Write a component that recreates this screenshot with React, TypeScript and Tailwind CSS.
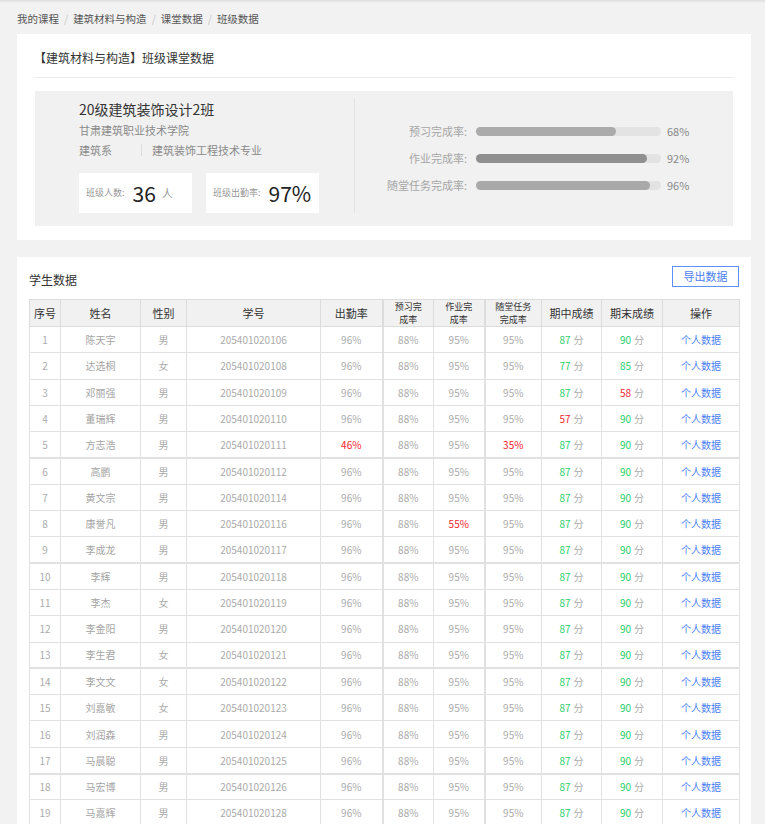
import React from "react";

type Row = {
  no: number;
  name: string;
  sex: string;
  id: string;
  att: string;
  pre: string;
  hw: string;
  task: string;
  mid: number;
  fin: number;
};

const base = { att: "96%", pre: "88%", hw: "95%", task: "95%", mid: 87, fin: 90 };

const rows: Row[] = [
  { no: 1, name: "陈天宇", sex: "男", id: "205401020106", ...base },
  { no: 2, name: "达选桐", sex: "女", id: "205401020108", ...base, mid: 77, fin: 85 },
  { no: 3, name: "邓丽强", sex: "男", id: "205401020109", ...base, fin: 58 },
  { no: 4, name: "董瑞辉", sex: "男", id: "205401020110", ...base, mid: 57 },
  { no: 5, name: "方志浩", sex: "男", id: "205401020111", ...base, att: "46%", task: "35%" },
  { no: 6, name: "高鹏", sex: "男", id: "205401020112", ...base },
  { no: 7, name: "黄文宗", sex: "男", id: "205401020114", ...base },
  { no: 8, name: "康誉凡", sex: "男", id: "205401020116", ...base, hw: "55%" },
  { no: 9, name: "李成龙", sex: "男", id: "205401020117", ...base },
  { no: 10, name: "李辉", sex: "男", id: "205401020118", ...base },
  { no: 11, name: "李杰", sex: "女", id: "205401020119", ...base },
  { no: 12, name: "李金阳", sex: "男", id: "205401020120", ...base },
  { no: 13, name: "李生君", sex: "女", id: "205401020121", ...base },
  { no: 14, name: "李文文", sex: "女", id: "205401020122", ...base },
  { no: 15, name: "刘嘉敏", sex: "女", id: "205401020123", ...base },
  { no: 16, name: "刘润森", sex: "男", id: "205401020124", ...base },
  { no: 17, name: "马晨聪", sex: "男", id: "205401020125", ...base },
  { no: 18, name: "马宏博", sex: "男", id: "205401020126", ...base },
  { no: 19, name: "马嘉辉", sex: "男", id: "205401020128", ...base },
];

const bars = [
  { label: "预习完成率:", value: "68%", w: 140, color: "bg-[#ababab]" },
  { label: "作业完成率:", value: "92%", w: 171, color: "bg-[#909090]" },
  { label: "随堂任务完成率:", value: "96%", w: 174, color: "bg-[#a9a9a9]" },
];

function pctClass(v: string) {
  return parseInt(v) < 60 ? "text-[#f5222d]" : "text-[#ababab]";
}

function scoreClass(v: number) {
  return v < 60 ? "text-[#f5222d]" : "text-[#1fcf6b]";
}

export default function App() {
  const thick = (n: number) => n === 5 || n === 9 || n === 13 || n === 17;
  return (
    <div className="min-h-[824px] w-[765px] bg-[#f2f2f2] font-['Noto_Sans_CJK_SC',sans-serif] overflow-hidden">
      <div className="h-[3px] bg-gradient-to-b from-[#dcdcdc] to-[#f2f2f2]" />
      <div className="pl-[17px] pr-[14px]">
        {/* breadcrumb */}
        <div className="mt-[9px] flex h-[14px] items-center text-[10.5px] leading-[14px] text-[#555]">
          <span>我的课程</span>
          <span className="mx-[5px] text-[#c8c8c8]">/</span>
          <span>建筑材料与构造</span>
          <span className="mx-[5px] text-[#c8c8c8]">/</span>
          <span>课堂数据</span>
          <span className="mx-[5px] text-[#c8c8c8]">/</span>
          <span>班级数据</span>
        </div>

        {/* card 1 */}
        <div className="mt-[8px] bg-white px-[17px] pb-[14px] pt-[16px]">
          <div className="border-b border-[#ececec] pb-[11px] text-[12px] leading-[16px] text-[#333]">
            【建筑材料与构造】班级课堂数据
          </div>
          <div className="mt-[13px] ml-px mr-[1px] flex h-[135px] bg-[#f1f1f1] pt-[8px] pb-[13px]">
            <div className="w-[319px] shrink-0 pl-[44px]">
              <div className="text-[14px] leading-[20px] text-[#333]">20级建筑装饰设计2班</div>
              <div className="mt-[2px] text-[11px] leading-[18px] text-[#8a8a8a]">甘肃建筑职业技术学院</div>
              <div className="mt-[2px] flex items-center text-[11px] leading-[18px] text-[#8a8a8a]">
                <span className="w-[62px]">建筑系</span>
                <span className="h-[12px] w-px bg-[#dcdcdc]" />
                <span className="ml-[10px]">建筑装饰工程技术专业</span>
              </div>
              <div className="mt-[14px] flex gap-[14px]">
                <div className="flex h-[40px] w-[113px] items-center bg-white pl-[7px]">
                  <span className="text-[9px] text-[#999]">班级人数:</span>
                  <span className="ml-[8px] text-[21px] leading-none text-[#222]">36</span>
                  <span className="ml-[6px] text-[11px] text-[#999]">人</span>
                </div>
                <div className="flex h-[40px] w-[113px] items-center bg-white pl-[7px]">
                  <span className="text-[9px] text-[#999]">班级出勤率:</span>
                  <span className="ml-[8px] text-[21px] leading-none text-[#222]">97%</span>
                </div>
              </div>
            </div>
            <div className="mt-[-1px] w-px bg-[#e2e2e2]" />
            <div className="flex flex-col justify-center pt-[4px]">
              {bars.map((b) => (
                <div key={b.label} className="flex h-[27px] items-center">
                  <div className="w-[112px] text-right text-[11px] text-[#a6a6a6]">{b.label}</div>
                  <div className="ml-[9px] h-[9px] w-[185px] rounded-full bg-[#e3e3e3]">
                    <div className={`h-[9px] rounded-full ${b.color}`} style={{ width: b.w }} />
                  </div>
                  <div className="ml-[6px] text-[11px] text-[#888]">{b.value}</div>
                </div>
              ))}
            </div>
          </div>
        </div>

        {/* card 2 */}
        <div className="mt-[17px] bg-white px-[12px] pt-[9px]">
          <div className="flex items-end justify-between">
            <div className="text-[12px] leading-[16px] text-[#333] mb-[-1px]">学生数据</div>
            <button className="h-[21px] w-[67px] border border-[#5b8ff9] text-[11px] text-[#4a7ef7]">导出数据</button>
          </div>
          <table className="mt-[12px] w-[710px] table-fixed border-collapse text-center">
            <colgroup>
              <col className="w-[31px]" />
              <col className="w-[80px]" />
              <col className="w-[46px]" />
              <col className="w-[134px]" />
              <col className="w-[62px]" />
              <col className="w-[51px]" />
              <col className="w-[51px]" />
              <col className="w-[57px]" />
              <col className="w-[60px]" />
              <col className="w-[61px]" />
              <col className="w-[77px]" />
            </colgroup>
            <thead>
              <tr className="bg-[#f1f1f1] text-[11px] text-[#333]">
                <th className="h-[27px] border border-[#dcdcdc] p-0 font-normal">序号</th>
                <th className="border border-[#dcdcdc] p-0 font-normal">姓名</th>
                <th className="border border-[#dcdcdc] p-0 font-normal">性别</th>
                <th className="border border-[#dcdcdc] p-0 font-normal">学号</th>
                <th className="border border-[#dcdcdc] p-0 font-normal">出勤率</th>
                <th className="border border-[#dcdcdc] border-l-2 p-0 text-[9px] font-normal leading-[13px]">
                  预习完<br />成率
                </th>
                <th className="border border-[#dcdcdc] p-0 text-[9px] font-normal leading-[13px]">
                  作业完<br />成率
                </th>
                <th className="border border-[#dcdcdc] border-l-2 p-0 text-[9px] font-normal leading-[13px]">
                  随堂任务<br />完成率
                </th>
                <th className="border border-[#dcdcdc] p-0 font-normal">期中成绩</th>
                <th className="border border-[#dcdcdc] p-0 font-normal">期末成绩</th>
                <th className="border border-[#dcdcdc] p-0 font-normal">操作</th>
              </tr>
            </thead>
            <tbody>
              {rows.map((r) => {
                const b = thick(r.no) ? "border-b-2" : "";
                const cell = `border border-[#e1e1e1] p-0 ${b}`;
                return (
                  <tr key={r.no} className="text-[10px] text-[#ababab]">
                    <td className={`h-[26.3px] ${cell}`}>{r.no}</td>
                    <td className={`${cell} text-[#a5a5a5]`}>{r.name}</td>
                    <td className={cell}>{r.sex}</td>
                    <td className={cell}>{r.id}</td>
                    <td className={`${cell} ${pctClass(r.att)}`}>{r.att}</td>
                    <td className={`${cell} border-l-2 ${pctClass(r.pre)}`}>{r.pre}</td>
                    <td className={`${cell} ${pctClass(r.hw)}`}>{r.hw}</td>
                    <td className={`${cell} border-l-2 ${pctClass(r.task)}`}>{r.task}</td>
                    <td className={cell}>
                      <span className={scoreClass(r.mid)}>{r.mid}</span>
                      <span className="ml-[3px]">分</span>
                    </td>
                    <td className={cell}>
                      <span className={scoreClass(r.fin)}>{r.fin}</span>
                      <span className="ml-[3px]">分</span>
                    </td>
                    <td className={`${cell} text-[#4a7ef7]`}>个人数据</td>
                  </tr>
                );
              })}
            </tbody>
          </table>
        </div>
      </div>
    </div>
  );
}
